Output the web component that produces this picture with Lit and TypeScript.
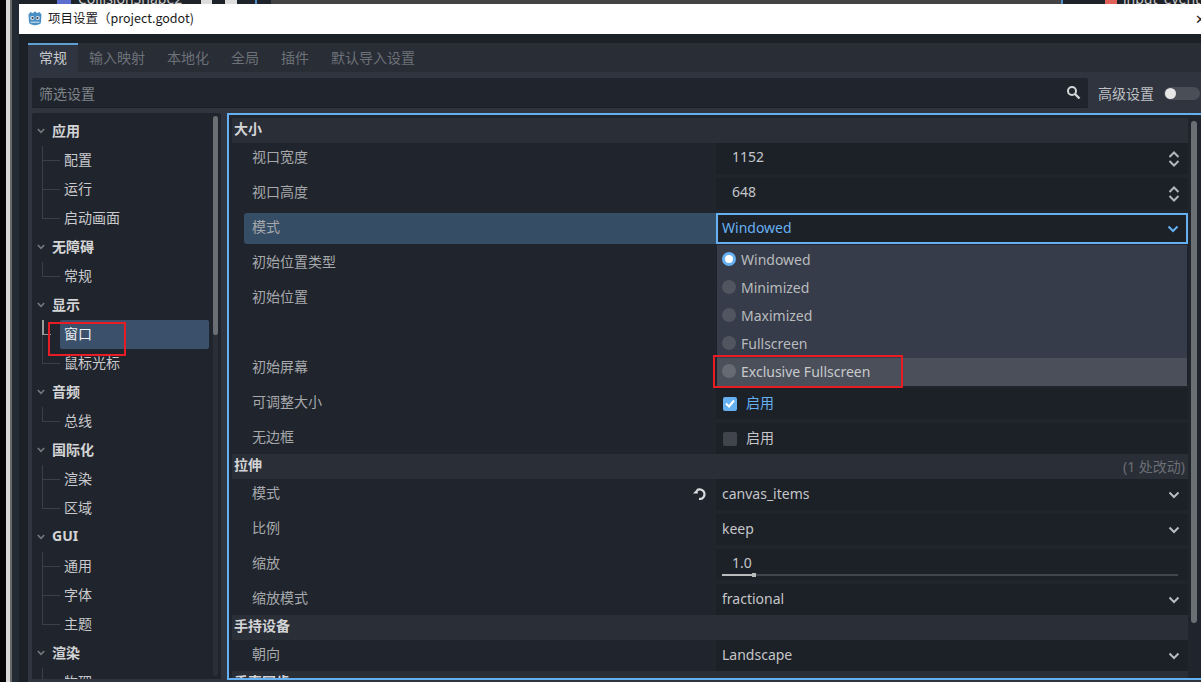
import { LitElement, html, css, svg } from "lit";
import { customElement } from "lit/decorators.js";

const chev = (color = "#b9bbbe") => html`<svg class="chev" width="12" height="8" viewBox="0 0 12 8"><path d="M1.5 1.5 6 6l4.5-4.5" fill="none" stroke=${color} stroke-width="2"/></svg>`;
const stepper = html`<svg class="chev" width="12" height="16" viewBox="0 0 12 16"><path d="M1.5 6 6 1.5 10.500 6M1.500 10 6 14.500 10.500 10" fill="none" stroke="#b4b6b9" stroke-width="2"/></svg>`;

type TreeItem = { t: string; s?: boolean; sel?: boolean; last?: boolean };
const tree: TreeItem[] = [
  { t: "应用", s: true }, { t: "配置" }, { t: "运行" }, { t: "启动画面", last: true },
  { t: "无障碍", s: true }, { t: "常规", last: true },
  { t: "显示", s: true }, { t: "窗口", sel: true }, { t: "鼠标光标", last: true },
  { t: "音频", s: true }, { t: "总线", last: true },
  { t: "国际化", s: true }, { t: "渲染" }, { t: "区域", last: true },
  { t: "GUI", s: true }, { t: "通用" }, { t: "字体" }, { t: "主题", last: true },
  { t: "渲染", s: true }, { t: "物理", last: true },
];

const select = (v: string) => html`<div class="field"><span class="val">${v}</span>${chev()}</div>`;
const number = (v: string) => html`<div class="field"><span class="val num">${v}</span>${stepper}</div>`;
const empty = html`<div class="field"></div>`;

@customElement("app-root")
export class AppRoot extends LitElement {
  static styles = css`
    :host { display: block; width: 1201px; height: 682px; overflow: hidden; position: relative; background: #1c2027;
      font-family: "Noto Sans", "Noto Sans CJK SC", sans-serif; font-size: 14px; color: #c5c6c9; }
    .root { display: flex; height: 682px; }
    .side { width: 19px; flex: none; display: flex; background: #050505; }
    .side i { display: block; flex: none; }
    .s1 { width: 6px; background: #050505; }
    .s2 { width: 4px; background: #d8d8d8; }
    .s2b { width: 2px; background: #6a6a6a; }
    .s3 { width: 7px; background: #222a33; }
    .main { flex: 1; min-width: 0; display: flex; flex-direction: column; }
    .behind { height: 4px; flex: none; overflow: hidden; position: relative; background: #1e2229; }
    .behind span { position: absolute; top: -11px; font-size: 14px; color: #c8c8c8; white-space: nowrap; }
    .behind b { position: absolute; top: 0; height: 4px; }
    .title { height: 30px; box-sizing: border-box; padding: 0 0 1px 9px; flex: none; background: #fff; display: flex; align-items: center; gap: 6px; color: #1a1a1a;
      font-family: "Noto Sans CJK SC", sans-serif; font-size: 12.500px; }
    .title .ttl { padding-bottom: 2px; white-space: nowrap; }
    .title .close { margin-left: auto; margin-right: -5px; font-size: 13px; color: #222; line-height: 1; }
    .body { flex: 1; min-height: 0; padding: 9px 0 0 9px; display: flex; flex-direction: column; }
    .tabs { height: 29px; flex: none; display: flex; background: #282d36; }
    .tab { padding: 0 11px; line-height: 29px; color: #6d7178; white-space: nowrap; }
    .tab.on { background: #2f3540; color: #c9cacd; border-top: 2px solid #5f9fd4; line-height: 25px; }
    .panel { flex: 1; min-height: 0; background: #2f343f; padding: 6px 0 2px 4px; display: flex; flex-direction: column; gap: 5px; }
    .filter { height: 30px; flex: none; display: flex; align-items: center; }
    .input { width: 1056px; height: 30px; box-sizing: border-box; background: #20252d; border-bottom: 1px solid #1c2027; border-radius: 2px; display: flex; align-items: center;
      justify-content: space-between; padding: 0 7px 0 7px; color: #7f8388; flex: none; }
    .adv { margin-left: 10px; color: #bfc1c4; white-space: nowrap; }
    .toggle { margin-left: 10px; width: 36px; height: 13px; border-radius: 7px; background: #4a4e57; display: flex; align-items: center; flex: none; }
    .toggle i { width: 11px; height: 11px; border-radius: 50%; background: #e6e6e6; margin-left: 1px; }
    .split { flex: 1; min-height: 0; display: flex; gap: 6px; }
    .tree { width: 189px; flex: none; background: #20242c; overflow: hidden; display: flex; border-radius: 2px 2px 0 0; height: 566px; }
    .tlist { width: 181px; flex: none; padding-top: 4px; }
    .tscroll { width: 5px; margin-top: 3px; margin-bottom: 3px; background: #2a2e36; border-radius: 3px; flex: none; }
    .tscroll i { display: block; height: 219px; background: #6b6e73; border-radius: 3px; }
    .ti { height: 29px; display: flex; align-items: center; white-space: nowrap; }
    .ti.sec { font-weight: 700; color: #d3d4d6; padding-left: 5px; gap: 7px; }
    .ti.sec span { padding-bottom: 4px; }
    .ti.sec svg { flex: none; margin-bottom: 2px; }
    .conn { width: 18px; height: 29px; margin-left: 10px; flex: none;
      background: linear-gradient(#3b3f47, #3b3f47) 0 0 / 1px 100% no-repeat, linear-gradient(#3b3f47, #3b3f47) 0 14px / 100% 1px no-repeat; }
    .conn.last { background: linear-gradient(#3b3f47, #3b3f47) 0 0 / 1px 15px no-repeat, linear-gradient(#3b3f47, #3b3f47) 0 14px / 100% 1px no-repeat; }
    .conn.sel { background: linear-gradient(#9a9a9a, #9a9a9a) 0 0 / 2px 15px no-repeat, linear-gradient(#3b3f47, #3b3f47) 0 15px / 1px 14px no-repeat, linear-gradient(#9a9a9a, #9a9a9a) 0 14px / 9px 1px no-repeat; }
    .lab { padding-left: 4px; color: #c9cacd; flex: 1; line-height: 28px; height: 29px; }
    .lab.sel { background: #3a506b; color: #eef0f2; border-radius: 2px; margin-right: 4px; }
    .settings { flex: 1; min-width: 0; height: 567px; box-sizing: border-box; position: relative; background: #20242c; border: 2px solid #66b0f2; border-right: 0;
      display: flex; padding: 3px 4px 0 3px; gap: 3px; overflow: hidden; }
    .list { width: 956px; flex: none; display: flex; flex-direction: column; }
    .sect { height: 25px; flex: none; background: #2a2e37; display: flex; align-items: center; justify-content: space-between; padding: 0 3px 0 2px; font-weight: 700; color: #d3d4d6; }
    .sect span { padding-bottom: 5px; }
    .sect small { font-weight: 400; font-size: 14px; color: #6a6e75; padding-bottom: 1px; }
    .rows { display: flex; flex-direction: column; gap: 4px; }
    .row { height: 31px; display: flex; margin-left: 12px; flex: none; }
    .row.tall { height: 66px; }
    .name { flex: 1; padding-left: 8px; line-height: 28px; color: #a6a8ab; display: flex; justify-content: space-between; align-items: flex-start; padding-right: 9px; min-width: 0; }
    .row.on .name { background: #364d66; border-radius: 3px 0 0 3px; }
    .name svg { margin-top: 8px; }
    .field { width: 472px; flex: none; box-sizing: border-box; background: #1c2027; display: flex; align-items: center; justify-content: space-between; padding: 0 5px 0 6px; position: relative; }
    .field.focus { border: 2px solid #66b0f2; padding: 0 4px; color: #66b0f2; }
    .val { padding-bottom: 3px; }
    .num { padding-left: 10px; padding-bottom: 4px; }
    .chev { flex: none; margin-right: 3px; }
    .check { justify-content: flex-start; gap: 9px; padding-left: 7px; }
    .check .box { width: 14px; height: 14px; border-radius: 2px; background: #41444d; flex: none; display: flex; align-items: center; justify-content: center; }
    .check .box.on { background: #66b0f2; }
    .check.on { color: #66b0f2; }
    .check.off { color: #c5c6c9; }
    .slider { flex-direction: column; align-items: stretch; justify-content: flex-start; padding: 0 10px 0 6px; }
    .slider .n { padding-left: 10px; line-height: 20px; margin-top: 4px; }
    .track { height: 2px; background: #41454c; margin-top: 1px; display: flex; align-items: center; }
    .track i { width: 30px; height: 2px; background: #b9bbbd; }
    .track b { width: 4px; height: 4px; background: #b9bbbd; flex: none; }
    .popup { position: absolute; left: 488px; top: 130px; width: 470px; height: 141px; background: #363c49; display: flex; flex-direction: column; box-sizing: border-box; }
    .opt { height: 28px; display: flex; align-items: center; gap: 5px; padding-left: 5px; color: #b9bbbe; flex: none; white-space: nowrap; }
    .opt.hover { background: #4a4f5a; color: #c8c9cc; margin-top: 1px; padding-bottom: 2px; box-sizing: border-box; }
    .radio { width: 14px; height: 14px; border-radius: 50%; background: #50555f; flex: none; box-sizing: border-box; }
    .opt.hover .radio { background: #666a72; }
    .radio.on { background: #fff; border: 3px solid #66b0f2; }
    .vscroll { width: 6px; flex: none; margin-top: 3px; }
    .vscroll i { display: block; height: 502px; background: #6b6e73; border-radius: 3px; }
    .mark { position: absolute; border: 2px solid #e81c24; box-sizing: border-box; pointer-events: none; }
  `;

  private row(label: string, field: unknown, cls = "", extra: unknown = null) {
    return html`<div class="row ${cls}"><div class="name"><span>${label}</span>${extra}</div>${field}</div>`;
  }

  render() {
    const check = (on: boolean) => html`<div class="field check ${on ? "on" : "off"}"><span class="box ${on ? "on" : ""}">${on
      ? html`<svg width="10" height="9" viewBox="0 0 10 9"><path d="M1 4.500 4 7.500 9 1.500" fill="none" stroke="#fff" stroke-width="2"/></svg>` : ""}</span><span class="val">启用</span></div>`;
    const reset = html`<svg width="14" height="14" viewBox="0 0 14 14"><path d="M4 3.200A4.800 4.800 0 1 1 6 11.900" fill="none" stroke="#dcdde0" stroke-width="2.200"/><path d="M0 6.500 4.800 1.500v5z" fill="#dcdde0"/></svg>`;
    return html`
      <div class="root">
        <div class="side"><i class="s1"></i><i class="s2"></i><i class="s2b"></i><i class="s3"></i></div>
        <div class="main">
          <div class="behind">
            <b style="left:38px;width:14px;background:#5b6fd0"></b>
            <span style="left:59px">CollisionShape2</span>
            <b style="left:182px;width:11px;background:#ddd"></b>
            <b style="left:206px;width:12px;background:#ddd"></b>
            <b style="left:236px;width:2px;background:#4f8fc5"></b>
            <b style="left:252px;width:790px;background:#444"></b>
            <b style="left:1042px;width:2px;background:#4f8fc5"></b>
            <b style="left:1086px;width:12px;background:#e0605a"></b>
            <span style="left:1104px">input_event</span>
          </div>
          <div class="title">
            <svg width="14" height="15" viewBox="0 0 14 15">
              <path d="M0.500 3.500 2.500 1 5 2.200 6 .8H8L9 2.200 11.500 1 13.500 3.500 13 11Q13 13 10.500 13.600 7 15 3.500 13.600 1 13 1 11z" fill="#4a8fc4"/>
              <circle cx="4.300" cy="7" r="2.100" fill="#dfe9f2"/><circle cx="9.700" cy="7" r="2.100" fill="#dfe9f2"/>
              <circle cx="4.600" cy="7" r="1.100" fill="#3a3f4a"/><circle cx="9.400" cy="7" r="1.100" fill="#3a3f4a"/>
              <path d="M2.500 11.200h9" stroke="#dfe9f2" stroke-width="1"/>
            </svg>
            <span class="ttl">项目设置（project.godot)</span>
            <span class="close">✕</span>
          </div>
          <div class="body">
            <div class="tabs">
              ${["常规", "输入映射", "本地化", "全局", "插件", "默认导入设置"].map((t, i) => html`<div class="tab ${i === 0 ? "on" : ""}">${t}</div>`)}
            </div>
            <div class="panel">
              <div class="filter">
                <div class="input"><span>筛选设置</span>
                  <svg width="15" height="15" viewBox="0 0 15 15"><circle cx="6" cy="6" r="4" fill="none" stroke="#d4d5d7" stroke-width="2"/><path d="M9 9l4.500 4.500" stroke="#d4d5d7" stroke-width="2.400"/></svg>
                </div>
                <span class="adv">高级设置</span>
                <div class="toggle"><i></i></div>
              </div>
              <div class="split">
                <div class="tree">
                  <div class="tlist">
                    ${tree.map((n) => n.s
                      ? html`<div class="ti sec">${svg`<svg width="8" height="6" viewBox="0 0 8 6"><path d="M.8 1 4 4.300 7.200 1" fill="none" stroke="#75797f" stroke-width="1.600"/></svg>`}<span>${n.t}</span></div>`
                      : html`<div class="ti"><i class="conn ${n.last ? "last" : ""} ${n.sel ? "sel" : ""}"></i><span class="lab ${n.sel ? "sel" : ""}">${n.t}</span></div>`)}
                  </div>
                  <div class="tscroll"><i></i></div>
                </div>
                <div class="settings">
                  <div class="list">
                    <div class="sect"><span>大小</span></div>
                    <div class="rows">
                      ${this.row("视口宽度", number("1152"))}
                      ${this.row("视口高度", number("648"))}
                      ${this.row("模式", html`<div class="field focus"><span class="val">Windowed</span>${chev("#66b0f2")}</div>`, "on")}
                      ${this.row("初始位置类型", empty)}
                      ${this.row("初始位置", empty, "tall")}
                      ${this.row("初始屏幕", empty)}
                      ${this.row("可调整大小", check(true))}
                      ${this.row("无边框", check(false))}
                    </div>
                    <div class="sect"><span>拉伸</span><small>(1 处改动)</small></div>
                    <div class="rows">
                      ${this.row("模式", select("canvas_items"), "", reset)}
                      ${this.row("比例", select("keep"))}
                      ${this.row("缩放", html`<div class="field slider"><div class="n">1.0</div><div class="track"><i></i><b></b></div></div>`)}
                      ${this.row("缩放模式", select("fractional"))}
                    </div>
                    <div class="sect"><span>手持设备</span></div>
                    <div class="rows">
                      ${this.row("朝向", select("Landscape"))}
                    </div>
                    <div class="sect"><span>垂直同步</span></div>
                  </div>
                  <div class="vscroll"><i></i></div>
                  <div class="popup">
                    <div class="opt"><span class="radio on"></span>Windowed</div>
                    <div class="opt"><span class="radio"></span>Minimized</div>
                    <div class="opt"><span class="radio"></span>Maximized</div>
                    <div class="opt"><span class="radio"></span>Fullscreen</div>
                    <div class="opt hover"><span class="radio"></span>Exclusive Fullscreen</div>
                  </div>
                </div>
              </div>
            </div>
          </div>
        </div>
      </div>
      <div class="mark" style="left:48px;top:322px;width:78px;height:34px"></div>
      <div class="mark" style="left:713px;top:355px;width:190px;height:33px"></div>
    `;
  }
}
